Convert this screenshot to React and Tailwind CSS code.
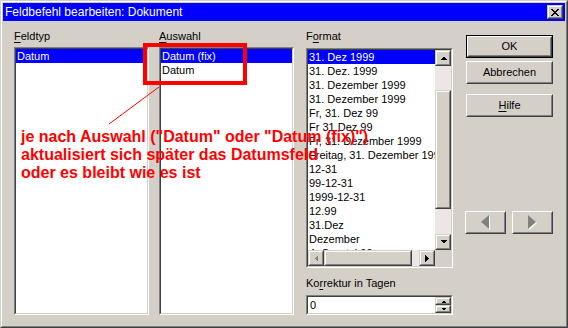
import React from 'react';

// Win2k-style bevels
const Sunken = ({ className = '', children, bg = 'bg-white' }) => (
    <div className={`border border-t-[#808080] border-l-[#808080] border-b-white border-r-white ${className}`}>
        <div className={`w-full h-full border border-t-[#404040] border-l-[#404040] border-b-[#d4d0c8] border-r-[#d4d0c8] overflow-hidden ${bg}`}>
            {children}
        </div>
    </div>
);

const Raised = ({ className = '', children, light = false }) => (
    <div className={`border ${light ? 'border-t-[#d4d0c8] border-l-[#d4d0c8]' : 'border-t-white border-l-white'} border-b-[#404040] border-r-[#404040] ${className}`}>
        <div className={`w-full h-full border ${light ? 'border-t-white border-l-white' : 'border-t-[#d4d0c8] border-l-[#d4d0c8]'} border-b-[#808080] border-r-[#808080] bg-[#d4d0c8] flex items-center justify-center`}>
            {children}
        </div>
    </div>
);

const Arrow = ({ dir, disabled = false }) => {
    const pts = {
        up: '0,4 7,4 3.5,0.5',
        down: '0,0 7,0 3.5,3.5',
        left: '4,0 4,7 0.5,3.5',
        right: '0,0 0,7 3.5,3.5',
    }[dir];
    const vertical = dir === 'up' || dir === 'down';
    return (
        <svg width={vertical ? 7 : 4} height={vertical ? 4 : 7} viewBox={vertical ? '0 0 7 4' : '0 0 4 7'} shapeRendering="crispEdges">
            <polygon points={pts} fill={disabled ? '#808080' : '#000'} />
        </svg>
    );
};

const Label = ({ pre = '', u, post = '' }) => (
    <div className="h-[13px] leading-[13px] text-[11px] text-black whitespace-nowrap">
        {pre}<span className="underline underline-offset-2">{u}</span>{post}
    </div>
);

const Item = ({ text, selected }) => (
    <div className={`h-[14px] leading-[14px] pl-[1px] text-[11px] whitespace-nowrap ${selected ? 'bg-[#0000ff] text-white' : 'text-black'}`}>
        {text}
    </div>
);

const formats = [
    '31. Dez 1999',
    '31. Dez. 1999',
    '31. Dezember 1999',
    '31. Dezember 1999',
    'Fr, 31. Dez 99',
    'Fr 31.Dez 99',
    'Fr, 31. Dezember 1999',
    'Freitag, 31. Dezember 1999',
    '12-31',
    '99-12-31',
    '1999-12-31',
    '12.99',
    '31.Dez',
    'Dezember',
    '4. Quartal 99',
];

const BigArrow = ({ dir }) => (
    <svg width="11" height="16" viewBox="0 0 11 16">
        {dir === 'left' ? (
            <>
                <polygon points="10,1 10,15 2,8" fill="#fff" />
                <polygon points="9,0 9,14 1,7" fill="#808080" />
            </>
        ) : (
            <>
                <polygon points="2,1 2,15 10,8" fill="#fff" />
                <polygon points="1,0 1,14 9,7" fill="#808080" />
            </>
        )}
    </svg>
);

const App = () => {
    return (
        <div className="relative w-[568px] h-[328px] font-['Liberation_Sans',Arial,sans-serif] border border-t-[#d4d0c8] border-l-[#d4d0c8] border-b-[#404040] border-r-[#404040]">
            <div className="w-full h-full border border-t-white border-l-white border-b-[#808080] border-r-[#808080] bg-[#d4d0c8] p-[1px] flex flex-col">
                {/* Title bar */}
                <div className="h-[18px] bg-[#0000ff] flex items-center justify-between pl-[2px] pr-[2px]">
                    <span className="text-white text-[12px] leading-[18px] whitespace-nowrap">Feldbefehl bearbeiten: Dokument</span>
                    <Raised light className="w-[16px] h-[14px]">
                        <svg width="8" height="7" viewBox="0 0 8 7" shapeRendering="crispEdges">
                            <path d="M0 0h2v1h-2zM6 0h2v1h-2zM1 1h2v1h-2zM5 1h2v1h-2zM2 2h4v1h-4zM3 3h2v1h-2zM2 4h4v1h-4zM1 5h2v1h-2zM5 5h2v1h-2zM0 6h2v1h-2zM6 6h2v1h-2z" fill="#000" />
                        </svg>
                    </Raised>
                </div>

                {/* Body */}
                <div className="flex pl-[11px] pt-[9px]">
                    {/* Feldtyp */}
                    <div className="w-[135px] flex flex-col">
                        <Label u="F" post="eldtyp" />
                        <Sunken className="mt-[4px] h-[268px]">
                            <Item text="Datum" selected />
                        </Sunken>
                    </div>

                    {/* Auswahl */}
                    <div className="w-[135px] ml-[10px] flex flex-col">
                        <Label u="A" post="uswahl" />
                        <Sunken className="mt-[4px] h-[268px]">
                            <Item text="Datum (fix)" selected />
                            <Item text="Datum" />
                        </Sunken>
                    </div>

                    {/* Format */}
                    <div className="w-[147px] ml-[12px] flex flex-col">
                        <Label pre="F" u="o" post="rmat" />
                        <Sunken className="mt-[5px] h-[220px]">
                            <div className="flex h-full">
                                <div className="w-[127px] flex flex-col">
                                    <div className="h-[200px] overflow-hidden">
                                        {formats.map((f, i) => (
                                            <Item key={i} text={f} selected={i === 0} />
                                        ))}
                                    </div>
                                    <div className="h-[16px] flex bg-[#ede6e6]">
                                        <Raised light className="w-[16px] h-[16px]">
                                            <Arrow dir="left" disabled />
                                        </Raised>
                                        <Raised light className="w-[88px] h-[16px]" />
                                        <div className="flex-1" />
                                        <Raised light className="w-[16px] h-[16px]">
                                            <Arrow dir="right" />
                                        </Raised>
                                    </div>
                                </div>
                                <div className="w-[16px] flex flex-col">
                                    <div className="h-[200px] flex flex-col bg-[#ede6e6]">
                                        <Raised light className="w-[16px] h-[16px]">
                                            <Arrow dir="up" />
                                        </Raised>
                                        <div className="h-[24px]" />
                                        <Raised light className="w-[16px] h-[119px]" />
                                        <div className="flex-1" />
                                        <Raised light className="w-[16px] h-[16px]">
                                            <Arrow dir="down" />
                                        </Raised>
                                    </div>
                                    <div className="h-[16px] bg-[#d4d0c8]" />
                                </div>
                            </div>
                        </Sunken>
                        <div className="mt-[9px]">
                            <Label pre="Ko" u="r" post="rektur in Tagen" />
                        </div>
                        <Sunken className="mt-[5px] h-[20px]">
                            <div className="flex h-full">
                                <div className="flex-1 text-[11px] leading-[16px] pl-[2px] text-black">0</div>
                                <div className="w-[16px] flex flex-col">
                                    <Raised light className="w-[16px] h-[8px]">
                                        <svg width="5" height="3" viewBox="0 0 5 3" shapeRendering="crispEdges">
                                            <polygon points="0,3 5,3 2.5,0.5" fill="#000" />
                                        </svg>
                                    </Raised>
                                    <Raised light className="w-[16px] h-[8px]">
                                        <svg width="5" height="3" viewBox="0 0 5 3" shapeRendering="crispEdges">
                                            <polygon points="0,0 5,0 2.5,2.5" fill="#000" />
                                        </svg>
                                    </Raised>
                                </div>
                            </div>
                        </Sunken>
                    </div>

                    {/* Buttons */}
                    <div className="w-[88px] ml-[12px] flex flex-col pt-[5px]">
                        <div className="ml-[1px] w-[87px] h-[23px] border border-black">
                            <Raised className="w-full h-full">
                                <span className="text-[11px] text-black">OK</span>
                            </Raised>
                        </div>
                        <Raised className="ml-[1px] w-[87px] h-[23px] mt-[3px]">
                            <span className="text-[11px] text-black">Abbrechen</span>
                        </Raised>
                        <Raised className="ml-[1px] w-[87px] h-[23px] mt-[10px]">
                            <span className="text-[11px] text-black"><span className="underline underline-offset-2">H</span>ilfe</span>
                        </Raised>
                        <div className="flex gap-[6px] mt-[94px]">
                            <Raised className="w-[41px] h-[23px]">
                                <BigArrow dir="left" />
                            </Raised>
                            <Raised className="w-[41px] h-[23px]">
                                <BigArrow dir="right" />
                            </Raised>
                        </div>
                    </div>
                </div>
            </div>

            {/* Red annotation overlay */}
            <div className="absolute left-[142px] top-[42px] w-[104px] h-[42px] border-[4px] border-[#ff0000]" />
            <svg className="absolute left-0 top-0 pointer-events-none" width="568" height="328">
                <line x1="158" y1="86" x2="108" y2="123" stroke="#ff0000" strokeWidth="1" />
            </svg>
            <div className="absolute left-[20px] top-[127px] text-[16px] leading-[18px] font-bold text-[#ff0000] whitespace-nowrap">
                je nach Auswahl ("Datum" oder "Datum (fix)")<br />
                aktualisiert sich später das Datumsfeld<br />
                oder es bleibt wie es ist
            </div>
        </div>
    );
};

export default App;
